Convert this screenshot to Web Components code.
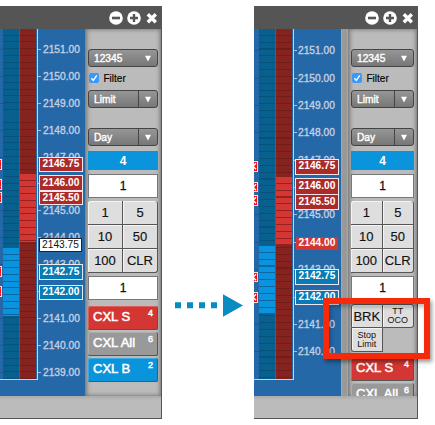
<!DOCTYPE html>
<html lang="en"><head><meta charset="utf-8"><title>Order ladder</title>
<style>
body{margin:0;background:#fff;width:435px;height:425px;overflow:hidden;font-family:"Liberation Sans",Arial,sans-serif}
main{position:relative;display:grid;grid-template-columns:162px 92px 164px;padding-top:6px}
flow-arrow{margin-top:288px}
call-out{position:absolute;left:323px;top:298px}
</style></head><body>
<main>
<trade-window><price-ladder view="a"></price-ladder><order-pad></order-pad></trade-window>
<flow-arrow></flow-arrow>
<trade-window><price-ladder view="b"></price-ladder><order-pad extra></order-pad></trade-window>
<call-out></call-out>
</main>
<script>
class Base extends HTMLElement{
  constructor(){super();this.attachShadow({mode:'open'})}
  connectedCallback(){this.shadowRoot.innerHTML='<style>*{box-sizing:border-box}</style>'+this.view()}
}
customElements.define('trade-window',class extends Base{view(){return `<style>
:host{display:grid;grid-template-rows:23px 367px 23px;height:413px}
header{background:#555;display:flex;justify-content:flex-end;align-items:center;gap:4px;padding:0 3px 0 0}
svg{display:block;width:14px;height:14px}
.body{display:flex;border-right:1px solid #555;overflow:hidden}
footer{background:linear-gradient(#a9a9a9,#bbb 4px);border:solid #555;border-width:0 1px 1px 0}
</style><header>
<svg viewBox="0 0 14 14"><circle cx="7" cy="7" r="6.8" fill="#fff"/><path d="M3 7h8" stroke="#555" stroke-width="2.6"/></svg>
<svg viewBox="0 0 14 14"><circle cx="7" cy="7" r="6.8" fill="#fff"/><path d="M3 7h8M7 3v8" stroke="#555" stroke-width="2.4"/></svg>
<svg viewBox="0 0 14 14"><path d="M2.8 3.2l8 8M10.8 3.2l-8 8" stroke="#fff" stroke-width="3.4"/></svg>
</header><div class="body"><slot></slot></div><footer></footer>`}});

const views={
 a:{w:85,lead:3,pitch:26.92,start:7,n:13,skip:[5,9],axis:2151,x:39,
  red:[145,67.5],blue:[219,67.5],marks:[130,150,163,237,257],
  chips:[['2146.75','r',127.5,15],['2146.00','r',146,16],['2145.50','r',161.5,14.5],['2143.75','k',209,14],['2142.75','b',235,15.5],['2142.00','b',256,15]]},
 b:{w:87,lead:5,pitch:27.38,start:8,n:12,skip:[5,7,9],axis:2151,x:41,
  red:[148,68],blue:[217,68],marks:[132,152.5,166,242.5,263],
  chips:[['2146.75','r',129.5,16],['2146.00','r',149,16.5],['2145.50','r',165,15.5],['2144.00','l',207.5,13],['2142.75','b',239.5,16],['2142.00','b',260.5,15.5]]}};
customElements.define('price-ladder',class extends Base{view(){
 const v=views[this.getAttribute('view')];let rows='';
 for(let i=0;i<v.n;i++)rows+=`<div class="row"><i></i><span>${v.skip.includes(i)?'':(v.axis-i)+'.00'}</span></div>`;
 return `<style>
:host{display:block;position:relative;flex:none;width:${v.w}px;height:367px;background:#2468a8;overflow:hidden}
.depth{position:absolute;inset:0 auto auto 0;display:flex;gap:1px;width:${v.lead+35}px;height:351px;padding-left:${v.lead}px;border:solid #c5d4e5;border-width:0 1px 1px 0;z-index:1}
.col{width:16px;height:350px;--d:#07608d;--l:#0a94e0;--line:#07527d;--s:${v.blue[0]}px;--h:${v.blue[1]}px;--g:#0768a2;background:var(--d);position:relative}
.col::after{content:"";position:absolute;inset:0;background:repeating-linear-gradient(transparent 0 5.75px,var(--line) 5.75px ${v.pitch/4}px)}
.col::before{content:"";z-index:1;position:absolute;left:0;right:0;top:var(--s);height:var(--h);background:repeating-linear-gradient(var(--l) 0 5.75px,var(--g) 5.75px ${v.pitch/4}px)}
.col.s{--d:#86231f;--l:#d43733;--line:#741c1a;--g:#98201e;--s:${v.red[0]}px;--h:${v.red[1]}px}
.rows{padding-top:${v.start}px}
.row{height:${v.pitch}px;display:flex;align-items:center;font-size:10.2px;color:#c4cfe0;-webkit-text-stroke:.35px #c4cfe0;background:linear-gradient(#1c5894,#1c5894) 0 50%/${v.lead}px 1px no-repeat}
.row i{width:3px;height:1px;background:#a9bfd9;margin:0 2px 0 ${v.lead+35}px}
.row span{margin-left:${v.lead==3?0:-1}px}
.chip{position:absolute;z-index:2;left:${v.x}px;width:44px;display:grid;place-items:center;font-size:10.2px;font-weight:bold;color:#fff;border:1px solid #f0e8ee;line-height:1}
.r{background:#ac2b29}.b{background:#087bb5}.k{background:#fff;color:#111;border-color:#222;font-weight:normal;width:43px}
.l{background:#d43733;border-color:#d43733;width:42px;margin-left:1px}
.m{position:absolute;left:${v.lead-11}px;width:10px;height:10.5px;border:1px solid #f3dce2;background:#f00d13;z-index:2;display:block}
</style><div class="depth"><div class="col"></div><div class="col s"></div></div><div class="rows">${rows}</div>
${v.chips.map(c=>`<div class="chip ${c[1]}" style="top:${c[2]}px;height:${c[3]}px">${c[0]}</div>`).join('')}
${v.marks.map(y=>`<svg class="m" style="top:${y}px" viewBox="0 0 8 8"><path d="M1 1l6 6M7 1l-6 6" stroke="#fff" stroke-width="1.5"/></svg>`).join('')}`}});

customElements.define('drop-down',class extends Base{view(){return `<style>
:host{display:flex;height:18px;border:1px solid #444;border-radius:3px;background:linear-gradient(#969696,#777);color:#fff;font-size:10.2px;-webkit-text-stroke:.4px #fff;align-items:stretch}
span{flex:1;padding-left:5px;display:flex;align-items:center}
i{width:19px;display:grid;place-items:center}
:host([split]) i{border-left:1px solid #444}
svg{width:6px;height:7px}
</style><span><slot></slot></span><i><svg viewBox="0 0 6 7"><path d="M0 .8h6L3 6.4z" fill="#fff"/></svg></i>`}});
customElements.define('check-box',class extends Base{view(){return `<style>
:host{display:flex;align-items:center;gap:4.5px;height:12px;font-size:10px;color:#000;-webkit-text-stroke:.15px #000}
svg{width:10px;height:10px}</style><svg viewBox="0 0 10 10"><rect width="10" height="10" rx="2" fill="#3b99fc"/><path d="M2.4 5.2l1.9 2.2L7.8 2.4" fill="none" stroke="#fff" stroke-width="1.4"/></svg><slot></slot>`}});
customElements.define('qty-field',class extends Base{view(){return `<style>
:host{display:grid;place-items:center;height:24px;background:#fff;border:1px solid #777;font-size:12px;color:#111;-webkit-text-stroke:.3px #111}
:host([pos]){height:19px;background:#0a94dc;border:0;color:#fff;font-weight:bold;-webkit-text-stroke:0 #fff}
</style><slot></slot>`}});
customElements.define('key-grid',class extends Base{view(){return `<style>
:host{display:grid;grid-template-columns:1fr 1fr;grid-auto-rows:24px;border-radius:3px}
::slotted(b){box-sizing:border-box;display:grid;place-items:center;align-content:center;text-align:center;font-weight:normal;font-size:13px;line-height:1;color:#111;background:#dedede;border:solid #555;border-width:0 1px 1px 0;box-shadow:inset 1px 1px #f4f4f4;-webkit-text-stroke:.15px #111}
::slotted(.small){font-size:9px;line-height:9px;-webkit-text-stroke:0}
::slotted(b:first-child){border-radius:3px 0 0 0}::slotted(b:nth-child(2)){border-radius:0 3px 0 0}::slotted(b:nth-child(6)){border-radius:0 0 3px 0}
:host(.extra) ::slotted(b){border-width:1px 1px 1px 0}
:host(.extra) ::slotted(b:nth-child(odd)){border-left-width:1px}
:host(.extra) ::slotted(b:nth-child(2)){border-radius:0 3px 3px 0}
:host(.extra) ::slotted(b:nth-child(3)){border-top-width:0;border-radius:0 0 0 3px}
</style><slot></slot>`}});
customElements.define('cxl-button',class extends Base{view(){return `<style>
:host{display:flex;flex:none;justify-content:space-between;height:23.5px;border:solid #555;border-width:0 1px 1px 0;border-radius:2px;color:#fff;padding:4px 4px 0 5px;font-size:13px;line-height:14px;-webkit-text-stroke:.5px #fff;background:var(--c,#999);box-shadow:inset 1px 1px #fff3}
span{white-space:nowrap}
sup{font-size:9px;line-height:7px;vertical-align:top}
</style><span><slot></slot></span><sup>${this.getAttribute('n')}</sup>`}});

customElements.define('order-pad',class extends Base{view(){const x=this.hasAttribute('extra');return `<style>
:host{flex:1;min-width:0;display:flex;height:367px;background:#bbb}
.bar{width:7px;background:linear-gradient(90deg,#a6a6a6,#999 2px,#979797 5px,#aaa)}
.pad{flex:1;min-width:0;overflow:hidden;display:flex;flex-direction:column;padding:20px 3px 0;box-shadow:inset 3px 0 4px -1px #777,inset -3px 0 4px -2px #777,inset 0 3px 4px -2px #999,inset 0 -3px 4px -2px #999}
.pad>*{box-sizing:border-box;flex:none}
check-box{margin:5px 0 6px 1px}
.day{margin-top:20px}
.p{margin-top:5px}.q{margin-top:4px}.k{margin-top:3px}.q2{margin-top:3px}
.extra{margin-top:4px}
.cxl{display:flex;flex-direction:column;gap:2.5px;margin-top:${x?5:6}px}
</style>${x?'<div class="bar"></div>':''}<div class="pad">
<drop-down>12345</drop-down><check-box>Filter</check-box><drop-down split>Limit</drop-down><drop-down class="day" split>Day</drop-down>
<qty-field class="p" pos>4</qty-field><qty-field class="q">1</qty-field>
<key-grid class="k"><b>1</b><b>5</b><b>10</b><b>50</b><b>100</b><b>CLR</b></key-grid>
<qty-field class="q2">1</qty-field>
${x?'<key-grid class="extra"><b>BRK</b><b class="small">TT<br>OCO</b><b class="small">Stop<br>Limit</b></key-grid>':''}
<div class="cxl"><cxl-button n="4" style="--c:#d43733">CXL S</cxl-button><cxl-button n="6">CXL All</cxl-button>${x?'':'<cxl-button n="2" style="--c:#0a94dc">CXL B</cxl-button>'}</div>
</div>`}});
customElements.define('flow-arrow',class extends Base{view(){return `<style>:host{display:block}svg{display:block;width:92px;height:30px}</style>
<svg viewBox="0 0 92 30"><path d="M13 11.2h48" stroke="#0a8cc0" stroke-width="6" stroke-dasharray="6 6"/><path d="M61 .3v22.4L81 11.5z" fill="#0a8cc0"/></svg>`}});
customElements.define('call-out',class extends Base{view(){return `<style>:host{display:block;box-sizing:border-box;width:107px;height:61px;border:6px solid #f42a0a;z-index:5;box-shadow:2px 3px 4px #0006,inset 2px 3px 4px #0004}</style>`}});
</script></body></html>
